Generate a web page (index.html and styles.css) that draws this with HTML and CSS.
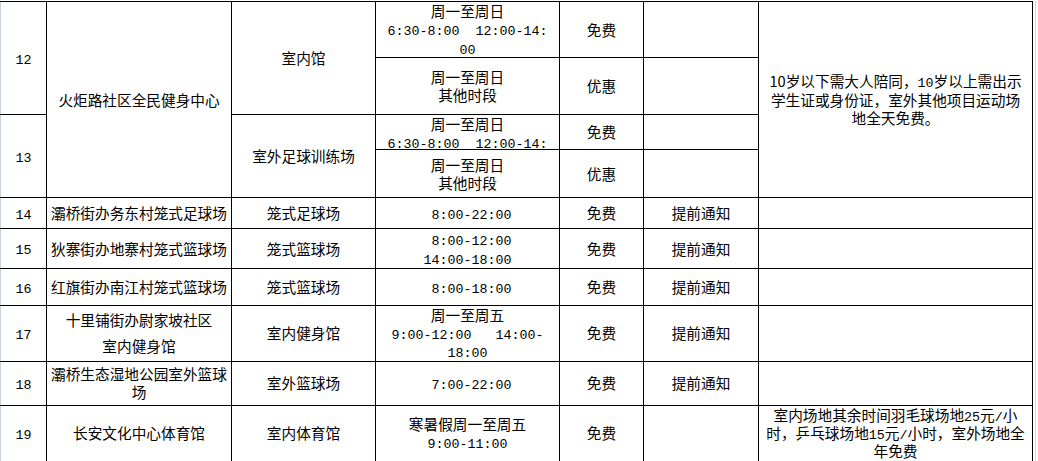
FILE: index.html
```html
<!DOCTYPE html>
<html lang="zh-CN">
<head>
<meta charset="utf-8">
<title>场馆开放表</title>
<link rel="stylesheet" href="styles.css">
</head>
<body>
<div class="sheet">
<table class="grid">
<colgroup>
<col class="c1"><col class="c2"><col class="c3"><col class="c4"><col class="c5"><col class="c6"><col class="c7">
</colgroup>
<tbody>
<tr class="h56">
<td class="num" rowspan="2"><span class="n">12</span></td>
<td rowspan="4">火炬路社区全民健身中心</td>
<td rowspan="2">室内馆</td>
<td class="pre">周一至周日<br><span class="n">6:30-8:00  12:00-14:</span><br><span class="n">00</span></td>
<td>免费</td>
<td></td>
<td rowspan="4" class="note">10岁以下需大人陪同，<span class="n">10</span>岁以上需出示<br>学生证或身份证，室外其他项目运动场<br>地全天免费。</td>
</tr>
<tr class="h57">
<td>周一至周日<br>其他时段</td>
<td>优惠</td>
<td></td>
</tr>
<tr class="h35">
<td class="num" rowspan="2"><span class="n">13</span></td>
<td rowspan="2">室外足球训练场</td>
<td class="top pre"><div class="clip">周一至周日<br><span class="n">6:30-8:00  12:00-14:</span></div></td>
<td>免费</td>
<td></td>
</tr>
<tr class="h48">
<td>周一至周日<br>其他时段</td>
<td>优惠</td>
<td></td>
</tr>
<tr class="h31">
<td class="num"><span class="n">14</span></td>
<td>灞桥街办务东村笼式足球场</td>
<td>笼式足球场</td>
<td class="pre"><span class="n"> 8:00-22:00</span></td>
<td>免费</td>
<td>提前通知</td>
<td></td>
</tr>
<tr class="h40">
<td class="num"><span class="n">15</span></td>
<td>狄寨街办地寨村笼式篮球场</td>
<td>笼式篮球场</td>
<td class="pre"><span class="n"> 8:00-12:00</span><br><span class="n">14:00-18:00</span></td>
<td>免费</td>
<td>提前通知</td>
<td></td>
</tr>
<tr class="h37">
<td class="num"><span class="n">16</span></td>
<td>红旗街办南江村笼式篮球场</td>
<td>笼式篮球场</td>
<td class="pre"><span class="n"> 8:00-18:00</span></td>
<td>免费</td>
<td>提前通知</td>
<td></td>
</tr>
<tr class="h55">
<td class="num"><span class="n">17</span></td>
<td class="wide">十里铺街办尉家坡社区<br>室内健身馆</td>
<td>室内健身馆</td>
<td class="pre">周一至周五<br><span class="n">9:00-12:00   14:00-</span><br><span class="n">18:00</span></td>
<td>免费</td>
<td>提前通知</td>
<td></td>
</tr>
<tr class="h44">
<td class="num"><span class="n">18</span></td>
<td>灞桥生态湿地公园室外篮球<br>场</td>
<td>室外篮球场</td>
<td class="pre"><span class="n"> 7:00-22:00</span></td>
<td>免费</td>
<td>提前通知</td>
<td></td>
</tr>
<tr class="h56">
<td class="num"><span class="n">19</span></td>
<td>长安文化中心体育馆</td>
<td>室内体育馆</td>
<td class="pre">寒暑假周一至周五<br><span class="n">9:00-11:00</span></td>
<td>免费</td>
<td></td>
<td class="note">室内场地其余时间羽毛球场地<span class="n">25</span>元<span class="n">/</span>小<br>时，乒乓球场地<span class="n">15</span>元<span class="n">/</span>小时，室外场地全<br>年免费</td>
</tr>
</tbody>
</table>
<div class="filler"></div>
</div>
</body>
</html>
```

FILE: styles.css
```css
html, body {
  margin: 0;
  padding: 0;
  background: #ffffff;
}

body {
  padding-top: 1px;
  font-family: "Noto Sans CJK SC", "Noto Sans CJK JP", sans-serif;
  font-size: 14.67px;
  color: #000000;
  overflow: hidden;
}

.sheet {
  display: flex;
  align-items: stretch;
}

.grid {
  border-collapse: collapse;
  table-layout: fixed;
  width: 1033px;
  flex: none;
}

.c1 { width: 46px; }
.c2 { width: 185px; }
.c3 { width: 144px; }
.c4 { width: 184px; }
.c5 { width: 84px; }
.c6 { width: 115px; }
.c7 { width: 274px; }

.grid td {
  border: 1px solid #000000;
  padding: 0;
  text-align: center;
  vertical-align: middle;
  line-height: 18px;
  overflow: hidden;
}

.grid td.num {
  border-left-color: #c9d1dc;
}

.grid td.top {
  vertical-align: top;
}

.grid td.pre {
  white-space: pre;
}

.grid td.wide {
  line-height: 26px;
}

.clip {
  height: 34px;
  overflow: hidden;
}

.n {
  font-family: "Liberation Mono", monospace;
  font-size: 13.33px;
  line-height: 1;
}

.h31 { height: 31px; }
.h35 { height: 35px; }
.h37 { height: 37px; }
.h40 { height: 40px; }
.h44 { height: 44px; }
.h48 { height: 48px; }
.h55 { height: 55px; }
.h56 { height: 56px; }
.h57 { height: 57px; }

.filler {
  flex: 1;
  margin-left: 2px;
  border-left: 1px solid #d4d4d4;
}
```
